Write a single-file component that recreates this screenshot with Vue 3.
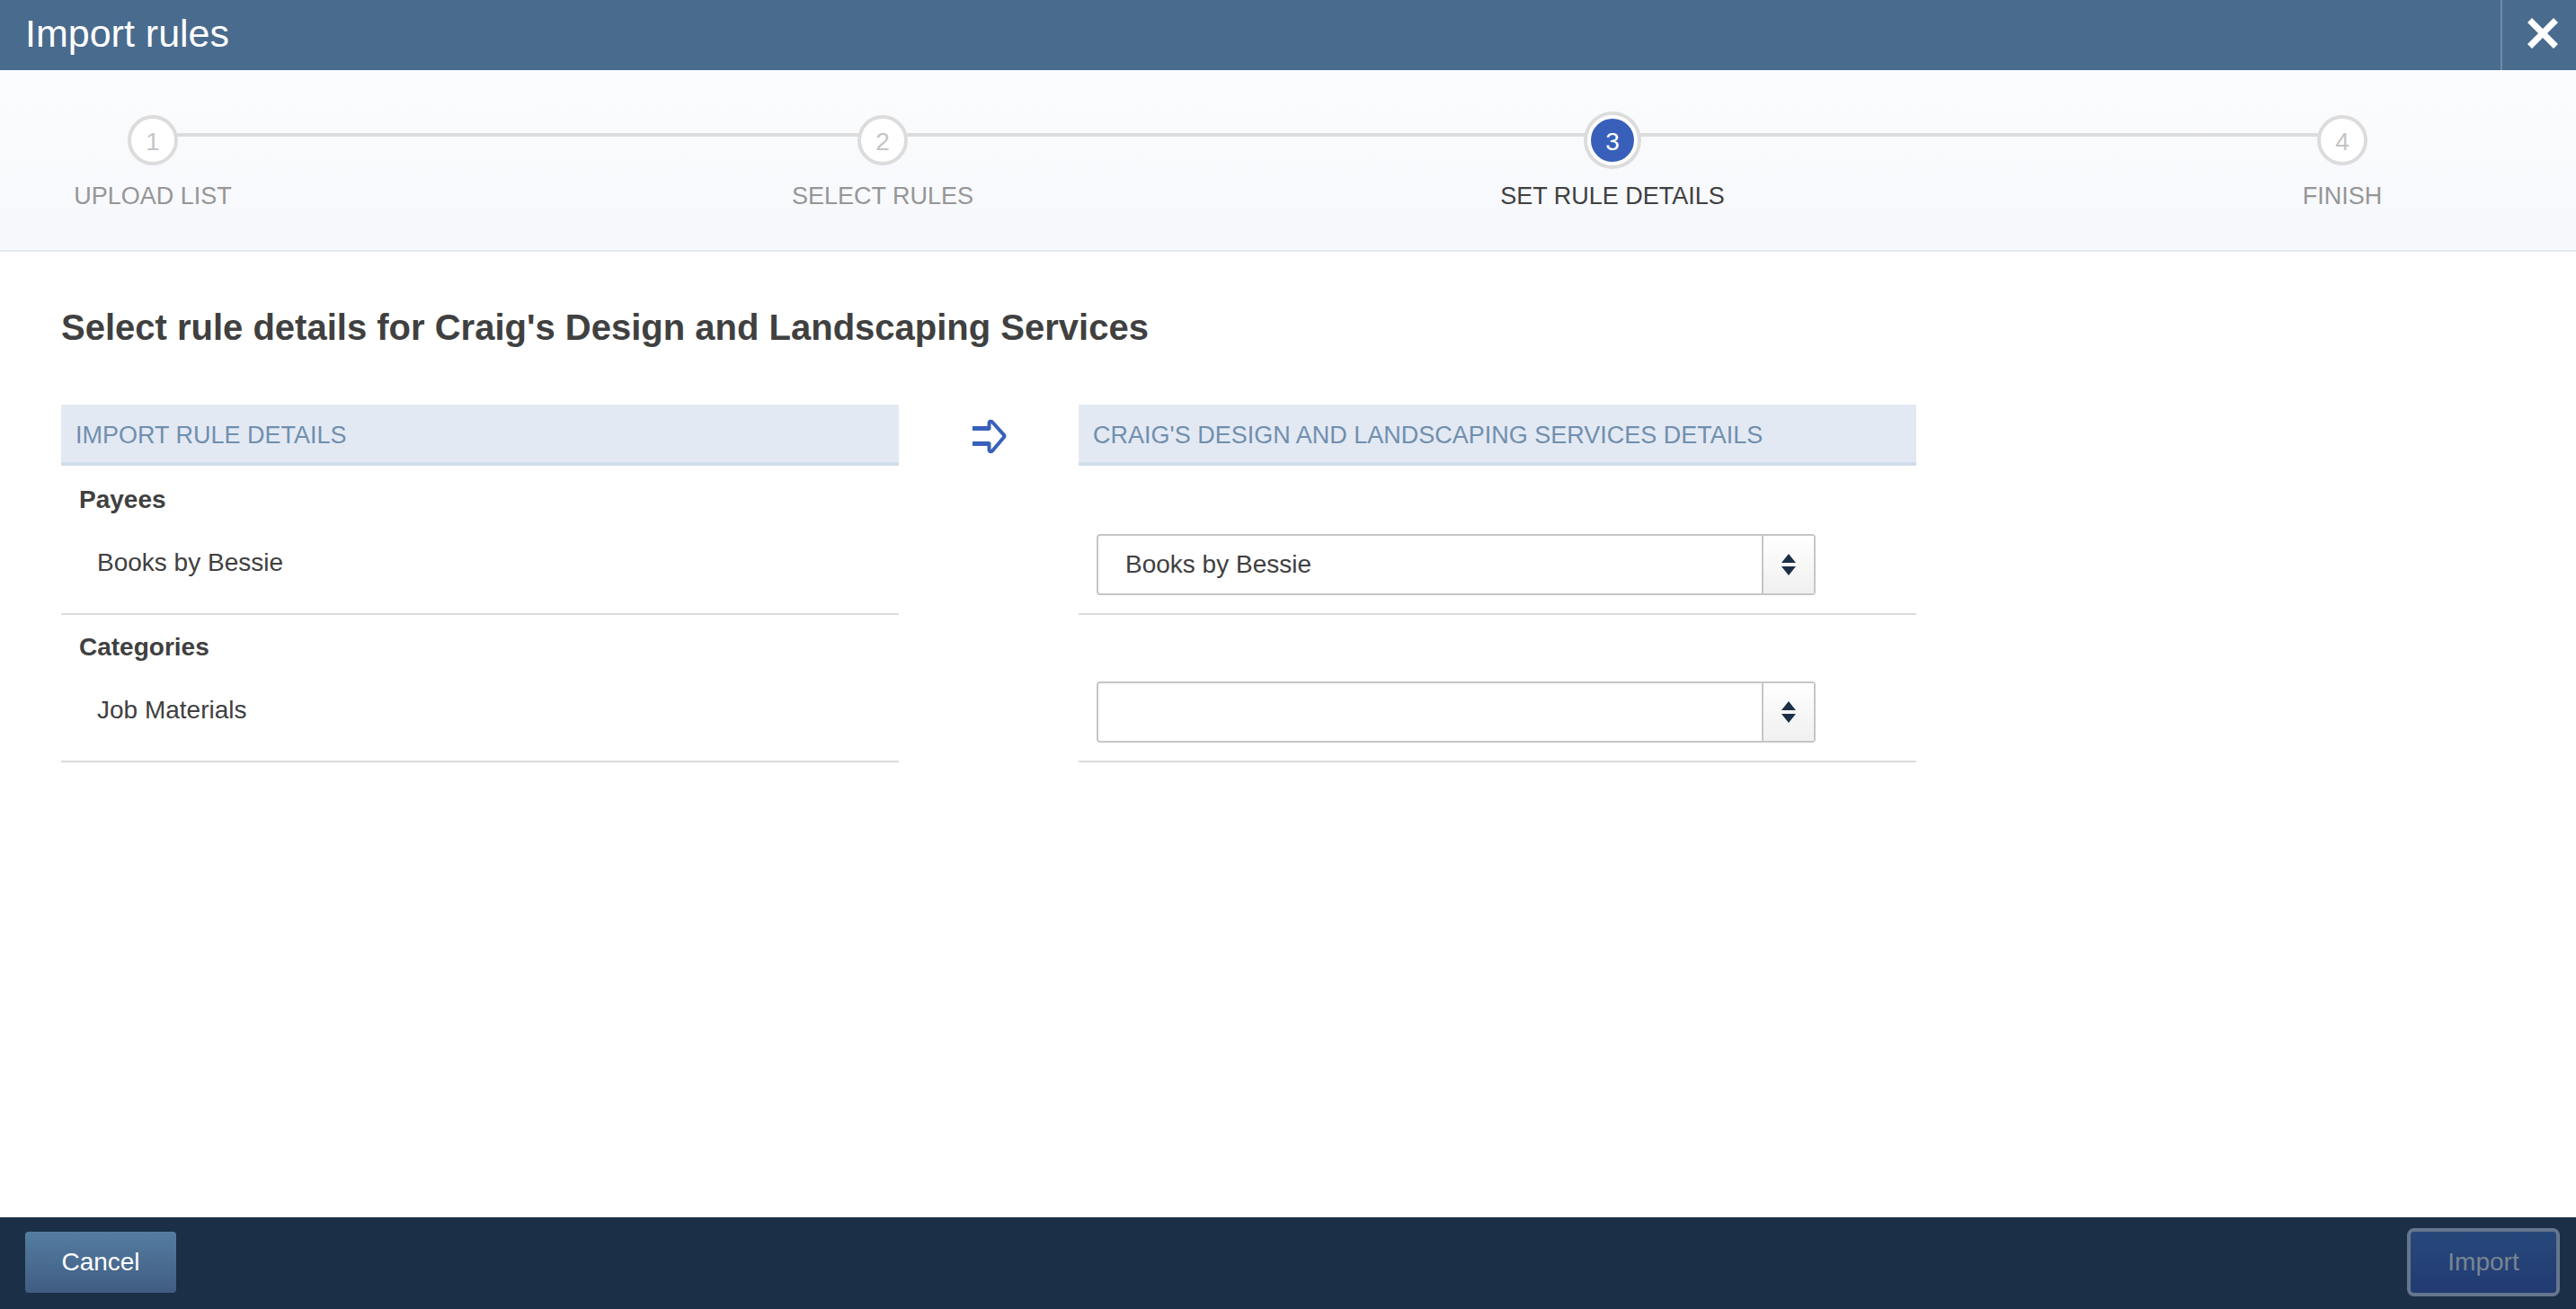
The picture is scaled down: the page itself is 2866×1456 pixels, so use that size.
<script setup>
import { ref } from 'vue'

const company = "Craig's Design and Landscaping Services"
const activeStep = 3
const steps = ['Upload list', 'Select rules', 'Set rule details', 'Finish']

const rules = ref([
  { id: 'payee', group: 'Payees', name: 'Books by Bessie', value: 'Books by Bessie' },
  { id: 'category', group: 'Categories', name: 'Job Materials', value: '' },
])
</script>

<template>
  <div class="page">
    <header class="titlebar">
      <h1>Import rules</h1>
      <button class="close" type="button" aria-label="Close">
        <svg width="34" height="34" viewBox="0 0 34 34" aria-hidden="true">
          <path fill="#fff" d="M5 0 17 12 29 0 34 5 22 17 34 29 29 34 17 22 5 34 0 29 12 17 0 5Z" />
        </svg>
      </button>
    </header>

    <nav class="progress" aria-label="Import progress">
      <div class="track"></div>
      <ol class="steps">
        <li v-for="(label, i) in steps" :key="label" class="step" :class="{ active: i + 1 === activeStep }">
          <span class="marker">{{ i + 1 }}</span>
          <span class="label">{{ label }}</span>
        </li>
      </ol>
    </nav>

    <main class="content">
      <h2>Select rule details for {{ company }}</h2>
      <table class="mapping">
        <colgroup>
          <col />
          <col class="gap" />
          <col />
        </colgroup>
        <thead>
          <tr>
            <th scope="col">Import rule details</th>
            <td class="arrow">
              <svg width="40" height="42" viewBox="0 0 40 42" aria-hidden="true">
                <g fill="none" stroke="#3860ba" stroke-linejoin="round">
                  <path stroke-width="5" d="M2 13.500H21M2 30.500H21" />
                  <path stroke-width="4" d="M20.500 15V8C20.500 5.500 23 5 24.500 7L37 20.800Q38 22 37 23.200L24.500 38C23 40 20.500 39.500 20.500 37V29" />
                </g>
              </svg>
            </td>
            <th scope="col">{{ company }} details</th>
          </tr>
        </thead>
        <tbody>
          <tr v-for="rule in rules" :key="rule.id">
            <td class="cell">
              <strong class="group">{{ rule.group }}</strong>
              <label class="name" :for="rule.id">{{ rule.name }}</label>
            </td>
            <td></td>
            <td class="cell choice">
              <div class="combo">
                <select :id="rule.id" v-model="rule.value">
                  <option value=""></option>
                  <option>Books by Bessie</option>
                </select>
                <span class="toggle">
                  <svg width="16" height="24" viewBox="0 0 16 24" aria-hidden="true">
                    <path fill="#1b3047" d="M8 0 16 10H0ZM8 24 0 14H16Z" />
                  </svg>
                </span>
              </div>
            </td>
          </tr>
        </tbody>
      </table>
    </main>

    <footer class="actions">
      <button class="cancel" type="button">Cancel</button>
      <button class="import" type="button" disabled>Import</button>
    </footer>
  </div>
</template>

<style>
body {
  margin: 0;
  background: #fff;
}
</style>

<style scoped>
* {
  box-sizing: border-box;
}
.page {
  display: flex;
  flex-direction: column;
  min-height: 100vh;
  font-family: "Liberation Sans", Arial, Helvetica, sans-serif;
  font-size: 28px;
  line-height: 32px;
  color: #404040;
}
button,
select {
  font: inherit;
}
.titlebar {
  display: flex;
  justify-content: space-between;
  height: 78px;
  background: #496b8e;
  color: #fff;
}
h1 {
  margin: 0;
  padding-left: 28px;
  font-size: 43px;
  font-weight: 400;
  line-height: 74px;
}
.close {
  display: flex;
  width: 84px;
  padding: 20px 20px 0 28px;
  border: 0;
  border-left: 2px solid #708aa6;
  background: none;
}
.close svg {
  flex: none;
}
.progress {
  display: grid;
  height: 202px;
  border-bottom: 2px solid #e3e9f4;
  background: linear-gradient(#fbfcfd, #f6f8fc);
}
.track {
  grid-area: 1 / 1;
  height: 4px;
  margin: 70px 260px 0 170px;
  background: #dcdcdc;
}
.steps {
  grid-area: 1 / 1;
  display: flex;
  justify-content: space-between;
  margin: 0;
  padding: 50px 130px 0 40px;
  list-style: none;
}
.step {
  display: flex;
  flex-direction: column;
  align-items: center;
  gap: 18px;
  width: 260px;
}
.marker {
  width: 56px;
  height: 56px;
  border: 4px solid #dcdcdc;
  border-radius: 50%;
  background: #fff;
  color: #c5c5c5;
  line-height: 52px;
  text-align: center;
}
.label {
  font-size: 27px;
  color: #969696;
  text-transform: uppercase;
  white-space: nowrap;
}
.active .marker {
  border-color: #fff;
  background: #3860ba;
  box-shadow: 0 0 0 4px #dcdcdc;
  color: #fff;
}
.active .label {
  color: #404040;
}
.content {
  flex: 1;
  padding: 60px 68px;
}
h2 {
  margin: 0 0 62px;
  font-size: 40px;
  line-height: 48px;
}
.mapping {
  width: 100%;
  max-width: 2064px;
  table-layout: fixed;
  border-collapse: separate;
  border-spacing: 0;
}
.gap {
  width: 200px;
}
th {
  height: 68px;
  padding: 4px 16px 0;
  border-bottom: 4px solid #d0ddea;
  background: #e3e9f3;
  color: #708fae;
  font-size: 27px;
  font-weight: 400;
  text-align: left;
  text-transform: uppercase;
}
.arrow {
  padding: 0;
  text-align: center;
  vertical-align: middle;
}
.arrow svg {
  display: block;
  margin: 0 auto;
}
.cell {
  height: 164px;
  padding: 20px;
  border-bottom: 2px solid #dcdcdc;
  vertical-align: top;
}
.group,
.name {
  display: block;
}
.name {
  margin-top: 38px;
  padding-left: 20px;
}
.choice {
  vertical-align: bottom;
}
tbody tr:first-child .cell {
  height: 166px;
  padding-top: 22px;
}
.combo {
  display: grid;
  width: 100%;
  max-width: 800px;
  height: 68px;
}
.combo select {
  grid-area: 1 / 1;
  width: 100%;
  padding: 0 60px 0 30px;
  border: 2px solid #c6c6c6;
  border-radius: 4px;
  appearance: none;
  background: #fff;
  color: #404040;
}
.toggle {
  grid-area: 1 / 1;
  justify-self: end;
  display: flex;
  align-items: center;
  justify-content: center;
  width: 58px;
  margin: 2px;
  border-left: 2px solid #c6c6c6;
  background: linear-gradient(#fff, #f0f0f0);
  pointer-events: none;
}
.actions {
  display: flex;
  align-items: center;
  justify-content: space-between;
  height: 102px;
  padding: 0 18px 2px 28px;
  background: #1b3047;
}
.cancel {
  width: 168px;
  height: 68px;
  border: 0;
  border-radius: 4px;
  background: linear-gradient(#547da1, #415c82);
  color: #fff;
}
.import {
  width: 170px;
  height: 76px;
  border: 4px solid #66768e;
  border-radius: 8px;
  background: linear-gradient(#27487a, #223b73) padding-box;
  color: #788692;
}
</style>
